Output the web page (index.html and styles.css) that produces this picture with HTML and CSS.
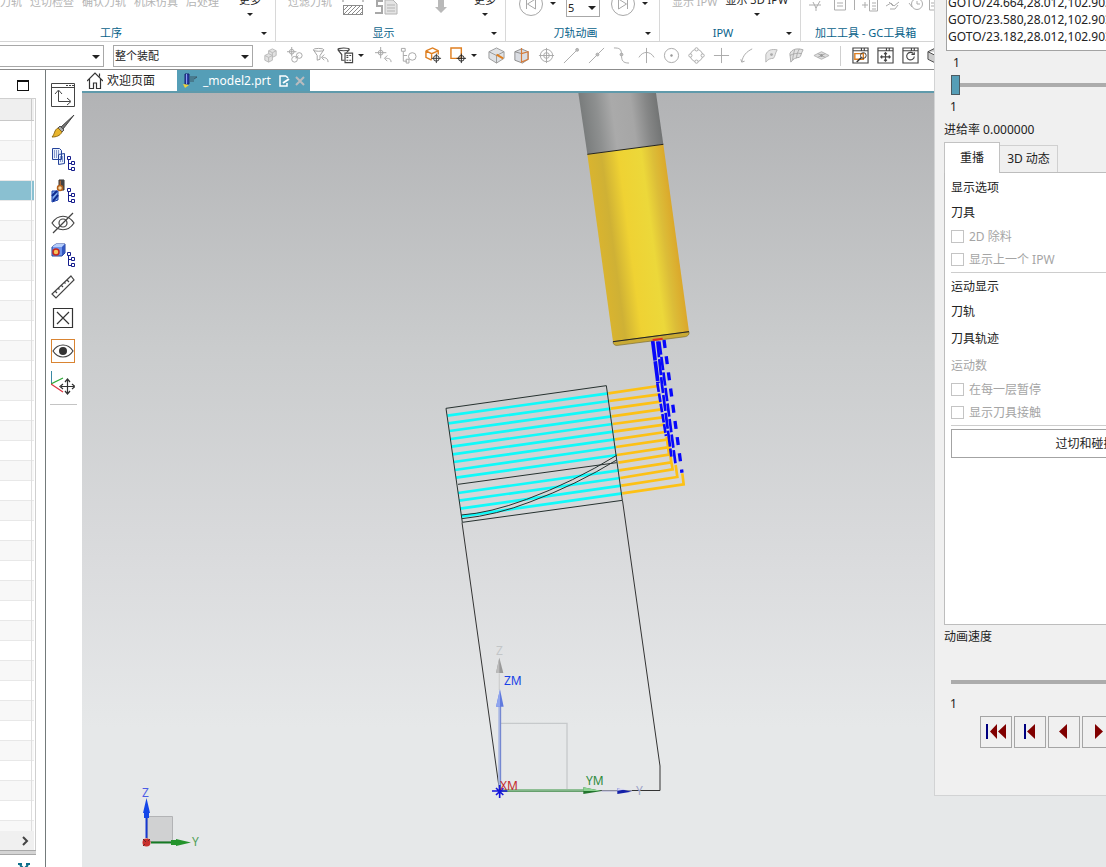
FILE: index.html
```html
<!DOCTYPE html>
<html lang="zh-CN">
<head>
<meta charset="utf-8">
<meta name="viewport" content="width=device-width, initial-scale=1">
<title>_model2.prt</title>
<link rel="stylesheet" href="styles.css">
</head>
<body>
<div class="app">
  <header class="ribbon">
    <section class="group group-operation">
      <div class="group-body">
        <span class="cmd dim">刀轨</span><span class="cmd dim">过切检查</span><span class="cmd dim">确认刀轨</span><span class="cmd dim">机床仿真</span><span class="cmd dim">后处理</span>
        <button class="more" type="button">更多<i class="caret"></i></button>
      </div>
      <div class="group-foot"><span>工序</span><i class="caret"></i></div>
    </section>
    <section class="group group-display">
      <div class="group-body">
        <span class="cmd dim">过滤刀轨</span>
        <svg class="big-icon" width="22" height="20" viewBox="0 0 22 20"><g fill="none" stroke="#8b8b8b"><path d="M1 2h2M19 2h2M1 1v4M21 1v4"/><rect x="1.500" y="8.500" width="19" height="9"/><path d="M2 13l4-4M2 17l8-8M6 17l8-8M10 17l8-8M14 17l6-6M18 17l2-2"/></g></svg>
        <svg class="big-icon" width="24" height="20" viewBox="0 0 24 20"><path d="M9 4H3v5h5v7H1" fill="none" stroke="#a8a8a8" stroke-width="2"/><path d="M11 3h8l4 4v10H11z" fill="#e4e4e4" stroke="#b4b4b4"/><path d="M13 8h8M13 11h8M13 14h8" stroke="#b4b4b4"/></svg>
        <svg class="big-icon down" width="14" height="20" viewBox="0 0 14 20"><path d="M4 3h6v7h3l-6 6-6-6h3z" fill="#b9b9b9"/></svg>
        <button class="more" type="button">更多<i class="caret"></i></button>
      </div>
      <div class="group-foot"><span>显示</span><i class="caret"></i></div>
    </section>
    <section class="group group-anim">
      <div class="group-body">
        <svg class="big-icon round" width="26" height="26" viewBox="0 0 26 26"><g fill="none" stroke="#a8a8a8"><circle cx="13" cy="13" r="11.500"/><path d="M8.500 8v10M17.500 8v10l-8-5z"/></g></svg>
        <i class="caret"></i>
        <label class="spin"><select aria-label="速度"><option>5</option></select></label>
        <svg class="big-icon round" width="26" height="26" viewBox="0 0 26 26"><g fill="none" stroke="#a8a8a8"><circle cx="13" cy="13" r="11.500"/><path d="M17.500 8v10M8.500 8v10l8-5z"/></g></svg>
        <i class="caret"></i>
      </div>
      <div class="group-foot"><span>刀轨动画</span><i class="caret"></i></div>
    </section>
    <section class="group group-ipw">
      <div class="group-body">
        <span class="cmd dim">显示 IPW</span>
        <button class="more" type="button">显示 3D IPW<i class="caret"></i></button>
      </div>
      <div class="group-foot"><span>IPW</span><i class="caret"></i></div>
    </section>
    <section class="group group-gc">
      <div class="group-body">
        <svg width="132" height="18" viewBox="0 0 132 18"><g fill="none" stroke="#adadad"><path d="M4 11h12M8 8l3 6 4-7M11 13v4"/><path d="M29.500 6v10h11V6M32 9h6M32 12h6M49.500 2v14"/><path d="M57 11h6M60 8v6M64.500 6v11h8V6M67 9h4M67 12h4M67 15h4"/><path d="M81 12l5-3 3 3 5-4M85 15h5l3-4M84 8l4 4"/><circle cx="112" cy="10" r="5.500"/><path d="M112 7v3h3M104 9l3 4M124.500 6v10h6M126 9h4M126 12h4"/></g></svg>
      </div>
      <div class="group-foot"><span>加工工具 - GC工具箱</span></div>
    </section>
  </header>

  <div class="toolbar">
    <label class="combo combo-filter"><select aria-label="类型过滤器"><option></option></select></label>
    <label class="combo combo-scope"><select aria-label="选择范围"><option>整个装配</option></select></label>
    <div class="tools">
      <button type="button" aria-label="部件"><svg viewBox="0 0 18 18"><g fill="#e2e2e2" stroke="#b9b9b9"><path d="M7 4l4-2 4 2v5l-4 2-4-2z"/><path d="M7 4l4 2 4-2M11 6v5" fill="none"/><path d="M3 9l4-2 4 2v5l-4 2-4-2z"/><path d="M3 9l4 2 4-2M7 11v5" fill="none"/></g></svg></button>
      <button type="button" aria-label="链接"><svg viewBox="0 0 18 18"><g fill="none" stroke="#a5a5a5"><circle cx="5" cy="5" r="2.500"/><path d="M5 0v10M0 5h10"/><circle cx="13" cy="9" r="3"/><circle cx="8" cy="13" r="3"/><path d="M9 12l3-3"/></g></svg></button>
      <button type="button" aria-label="重置过滤器"><svg viewBox="0 0 18 18"><g fill="none" stroke="#a0a0a0"><ellipse cx="7" cy="3" rx="5.500" ry="1.500"/><path d="M1.500 3l4 6v5l3-1V9l4-6M17 16c0-4-3-5-6-5M13 8l-3 3 3 3"/></g></svg></button>
      <button type="button" aria-label="常规过滤器"><svg viewBox="0 0 18 18"><g fill="none" stroke="#444" stroke-width="1.200"><ellipse cx="7" cy="2.500" rx="6" ry="1.500"/><path d="M1 3l4 5v6h3M13 3l-3 3"/><path d="M8.500 6.500h8v10h-8z" fill="#fff"/><path d="M10 9h2M13 9h2M10 11h2M10 14h2M13 14h2"/></g></svg></button>
      <i class="caret"></i>
      <button type="button" aria-label="撤销捕捉"><svg viewBox="0 0 18 18"><g fill="none" stroke="#a5a5a5"><circle cx="6" cy="6" r="2.500"/><path d="M6 0v12M0 6h12M17 16c0-4-3-4-6-4M13 9l-3 3 3 3"/></g></svg></button>
      <button type="button" aria-label="特征树"><svg viewBox="0 0 18 18"><g fill="none" stroke="#a5a5a5"><path d="M1.500 1.500h4v3h-4zM3.500 5v10h4M3.500 9h4M6.500 13h3v4h-3z"/><circle cx="13" cy="10" r="4"/></g></svg></button>
      <button type="button" aria-label="体"><svg viewBox="0 0 18 18"><g fill="none" stroke="#df7f20" stroke-width="1.500"><path d="M1 4l7-3 6 3v4M1 4v7l6 3M1 4l6 3 7-3M7 7v6"/></g><g fill="none" stroke="#333"><circle cx="12" cy="12" r="3"/><path d="M12 7v10M7 12h10"/></g></svg></button>
      <button type="button" aria-label="矩形选择"><svg viewBox="0 0 18 18"><path d="M1 1h11v11H1z" fill="none" stroke="#df7f20" stroke-width="1.500"/><g fill="none" stroke="#222"><circle cx="12" cy="12" r="3"/><path d="M12 7v10M7 12h10"/></g></svg></button>
      <i class="caret"></i>
      <button type="button" aria-label="面"><svg viewBox="0 0 18 18"><g fill="#dfe2e6" stroke="#999"><path d="M1 5l8-4 8 4v7l-8 5-8-5z"/><path d="M1 5l8 4 8-4M9 9v8" fill="none"/></g><path d="M9 8l7 4" stroke="#df7f20" stroke-width="2"/></svg></button>
      <button type="button" aria-label="边"><svg viewBox="0 0 18 18"><g fill="#dadde3" stroke="#8b8b8b"><path d="M2 5l7-3 7 3v8l-6 4-8-3z"/><path d="M2 5l7 2" /></g><path d="M9 1v15l7-3V5L9 7" fill="none" stroke="#d77b38" stroke-width="1.200"/></svg></button>
      <button type="button" aria-label="中心点"><svg viewBox="0 0 18 18"><g fill="none" stroke="#a8a8a8"><circle cx="9" cy="9" r="6.500"/><circle cx="9" cy="9" r="3"/><path d="M9 1v16M1 9h16"/></g></svg></button>
      <button type="button" aria-label="端点"><svg viewBox="0 0 18 18"><g fill="none" stroke="#a8a8a8"><path d="M1 17L14 4"/><circle cx="15" cy="3" r="1.500" fill="#bbb"/></g></svg></button>
      <button type="button" aria-label="中点"><svg viewBox="0 0 18 18"><g fill="none" stroke="#a8a8a8"><path d="M1 17L17 1"/><circle cx="10" cy="8" r="1.500" fill="#bbb"/></g></svg></button>
      <button type="button" aria-label="控制点"><svg viewBox="0 0 18 18"><g fill="none" stroke="#a8a8a8"><path d="M1 1c6 0 8 1 8 7s1 9 8 9"/><circle cx="9" cy="8" r="1.500" fill="#bbb"/></g></svg></button>
      <button type="button" aria-label="交点"><svg viewBox="0 0 18 18"><g fill="none" stroke="#a8a8a8"><path d="M9 1v16M1 11c4-7 12-7 16 0"/></g></svg></button>
      <button type="button" aria-label="圆心"><svg viewBox="0 0 18 18"><g fill="none" stroke="#a8a8a8"><circle cx="9" cy="9" r="7.500"/><circle cx="9" cy="9" r="1" fill="#999"/></g></svg></button>
      <button type="button" aria-label="象限点"><svg viewBox="0 0 18 18"><g fill="#fff" stroke="#a8a8a8"><circle cx="9" cy="9" r="6.500"/><circle cx="9" cy="2.500" r="1.700"/><circle cx="9" cy="15.500" r="1.700"/><circle cx="2.500" cy="9" r="1.700"/><circle cx="15.500" cy="9" r="1.700"/></g></svg></button>
      <button type="button" aria-label="现有点"><svg viewBox="0 0 18 18"><path d="M9 1v16M1 9h16" stroke="#a8a8a8"/></svg></button>
      <button type="button" aria-label="曲线上的点"><svg viewBox="0 0 18 18"><g fill="none" stroke="#a8a8a8"><path d="M15 2C9 5 5 9 4 16"/><path d="M3 13l1 3 3-1" /></g></svg></button>
      <button type="button" aria-label="面上的点"><svg viewBox="0 0 18 18"><path d="M3 8c2-5 6-6 12-5-2 3-2 7-4 9-3 0-6 1-8 4z" fill="#e6e6e6" stroke="#b5b5b5"/><circle cx="9" cy="8" r="1.500" fill="#aaa"/></svg></button>
      <button type="button" aria-label="极点"><svg viewBox="0 0 18 18"><path d="M2 7c2-5 8-6 14-4-2 3-2 7-4 8-4 0-7 2-9 5z" fill="#e2e2e2" stroke="#aaa"/><path d="M7 3c-1 4-2 7-2 11M12 2c-2 4-3 7-3 10M2 9c4-2 8-3 12-2" stroke="#aaa" fill="none"/></svg></button>
      <button type="button" aria-label="栅格点"><svg viewBox="0 0 18 18"><path d="M1 9l8-4 8 4-8 4z" fill="#ddd" stroke="#b5b5b5"/><path d="M5 7l8 4M5 11l8-4" stroke="#aaa"/><circle cx="9" cy="9" r="1.500" fill="#999"/></svg></button>
      <span class="divider"></span>
      <button type="button" aria-label="窗口缩放"><svg viewBox="0 0 18 18"><g fill="none" stroke="#444" stroke-width="1.200"><path d="M1 1h16v16H1zM1 4h16M10 1v3M13 1v3"/></g><path d="M3 7h9v6H3z" fill="none" stroke="#df7f20" stroke-width="1.500"/><circle cx="12" cy="9" r="3" fill="none" stroke="#333"/><path d="M10 11l-5 5" stroke="#333" stroke-width="1.500"/></svg></button>
      <button type="button" aria-label="平移"><svg viewBox="0 0 18 18"><g fill="none" stroke="#444" stroke-width="1.200"><path d="M1 1h16v16H1zM1 4h16M10 1v3M13 1v3M9 6v9M4 10.500h10M7.500 7.500L9 6l1.500 1.500M7.500 13.500L9 15l1.500-1.500M5.500 9L4 10.500 5.500 12M12.500 9l1.500 1.500-1.500 1.500"/></g></svg></button>
      <button type="button" aria-label="旋转"><svg viewBox="0 0 18 18"><g fill="none" stroke="#444" stroke-width="1.200"><path d="M1 1h16v16H1zM1 4h16M10 1v3M13 1v3M12 7a4 4 0 1 0 1 3M13 5.500V8h-3"/></g></svg></button>
      <button type="button" aria-label="视图方位"><svg viewBox="0 0 18 18"><g fill="#ccc" stroke="#444"><path d="M1 5l8-4 8 4v8l-8 4-8-4zM1 5l8 4 8-4M9 9v8"/></g></svg></button>
    </div>
  </div>

  <div class="workspace">
    <aside class="navigator">
      <div class="nav-title"><button type="button" class="maximize" aria-label="最大化"></button></div>
      <div class="nav-grid">
        <div class="nav-head"></div>
        <div class="nav-rows"><div class="nav-selected"></div></div>
        <div class="nav-scroll"><button type="button" aria-label="向右滚动"><svg width="8" height="10" viewBox="0 0 8 10"><path d="M1 1l4 4-4 4" fill="none" stroke="#444" stroke-width="2"/></svg></button></div>
      </div>
      <div class="nav-split"></div>
      <div class="nav-next"><svg width="14" height="10" viewBox="0 0 14 10"><path d="M1 1h4M9 1h4M3 2l4 4 4-4" fill="none" stroke="#0e6f8b" stroke-width="2"/></svg></div>
    </aside>

    <nav class="sidebar">
      <button type="button" aria-label="视图坐标"><svg viewBox="0 0 24 24"><g fill="none" stroke="#444"><path d="M.500.500h23v23H.500zM.500 4.500h23M15 2.500h2M18 2.500h2M21 2.500h2M7.500 8v10.500H19M4 11l3.500-4 3.500 4M16 15l4 3.500-4 3.500"/></g></svg></button>
      <button type="button" aria-label="画笔"><svg viewBox="0 0 24 24"><path d="M23 0L10 12l2 2z" fill="#777" stroke="#444"/><path d="M9 11l4 4-2 2-4-4z" fill="#aaa" stroke="#555"/><path d="M7 13l4 4c-2 4-6 5-10 5 3-3 2-7 6-9z" fill="#e8b52c" stroke="#8f6a18"/></svg></button>
      <button type="button" aria-label="程序顺序视图"><svg viewBox="0 0 24 24"><g fill="#e6effc" stroke="#24439a"><path d="M1.500 1.500h7l2 2v9h-9zM7.500 7.500l6-1v10l-6 1z"/><path d="M3 4h5M3 6h5M3 8h4M3 10h4M9 10h4M9 12h4M9 14h4" stroke-dasharray="1 1"/></g><use href="#tree"/></svg></button>
      <button type="button" aria-label="机床视图"><svg viewBox="0 0 24 24"><path d="M8 1h5v10H8z" fill="#a4643b" stroke="#333"/><path d="M10 1h3v9h-3z" fill="#444"/><circle cx="9" cy="9" r="2.500" fill="#f8d9a0" stroke="#b4601c" stroke-width="1.500"/><path d="M1 12h6v9l-6 2z" fill="#84aff0" stroke="#183caa"/><path d="M1 17l5-5M2 22l5-6" stroke="#102c90" stroke-width="2"/><use href="#tree"/></svg></button>
      <button type="button" aria-label="隐藏"><svg viewBox="0 0 24 24"><g fill="none" stroke="#444" stroke-width="1.200"><path d="M1 12c6-9 16-9 22 0-6 9-16 9-22 0z"/><circle cx="12" cy="12" r="4"/><path d="M2 22L22 2"/></g></svg></button>
      <button type="button" aria-label="几何视图"><svg viewBox="0 0 24 24"><path d="M1 4l4-3h9v9l-3 3H1z" fill="#6f93ea" stroke="#24439a"/><path d="M1 4l4-3h9l-3 3z" fill="#b5cdfb"/><path d="M11 4l3-3v9l-3 3z" fill="#3458c0"/><circle cx="5" cy="9" r="3" fill="#f8c25a" stroke="#c7271d" stroke-width="1.500"/><use href="#tree"/></svg></button>
      <button type="button" aria-label="测量"><svg viewBox="0 0 24 24"><g fill="none" stroke="#444" stroke-width="1.200"><path d="M20 1l3 4L5 23l-4-4zM4 16l2 2M7 13l1.500 1.500M10 10l2 2M13 7l1.500 1.500M16 5l2 2"/></g></svg></button>
      <button type="button" aria-label="关闭视图"><svg viewBox="0 0 24 24"><path d="M2.500 1.500h19v19h-19zM6 5l12 12M18 5L6 17" fill="none" stroke="#333" stroke-width="1.200"/></svg></button>
      <button type="button" class="on" aria-label="显示"><svg viewBox="0 0 24 24"><path d="M2 12c5-8 15-8 20 0-5 8-15 8-20 0z" fill="none" stroke="#444" stroke-width="1.200"/><circle cx="12" cy="12" r="4" fill="#333"/></svg></button>
      <button type="button" aria-label="移动坐标"><svg viewBox="0 0 24 24"><path d="M.500 0v13" stroke="#3b88a4"/><path d="M0 13l12-6" stroke="#2ea836" stroke-width="1.200"/><path d="M0 13l12 8" stroke="#dd3440" stroke-width="1.200"/><path d="M16.500 9v13M10 15.500h13M14 11l2.500-3 2.500 3M14 20l2.500 3 2.500-3M12 13l-3 2.500 3 2.500M21 13l3 2.500-3 2.500" fill="none" stroke="#333" stroke-width="1.200"/></svg></button>
      <hr>
    </nav>

    <main class="view">
      <div class="tabs">
        <a href="#home" class="tab"><svg width="16" height="17" viewBox="0 0 16 17"><path d="M0 9l8-8 8 8M2.500 7v9.500h4V11h3v5.500h4V7M12.500 4.500V1.500" fill="none" stroke="#333" stroke-width="1.200"/></svg>欢迎页面</a>
        <a href="#model" class="tab active"><svg width="16" height="16" viewBox="0 0 16 16"><path d="M3 1h4v10H3z" fill="#2b3da8" stroke="#18246e"/><path d="M4.500 1v10" stroke="#8b9ef0"/><path d="M8 4h7l-3 2H8M8 8h4" stroke="#3c5866" fill="none"/><path d="M1 11l6 1-4 3z" fill="#f0d23a"/></svg><span>_model2.prt</span><svg class="edit" width="11" height="12" viewBox="0 0 11 12"><path d="M7 1H1v10h7V8M7 1l2 2" fill="none" stroke="#fff" stroke-width="1.500"/><path d="M4 8l6-4" stroke="#fff" stroke-width="2"/></svg><button type="button" aria-label="关闭"><svg width="10" height="10" viewBox="0 0 10 10"><path d="M1 1l8 8M9 1L1 9" stroke="#b9bcbf" stroke-width="2"/></svg></button></a>
      </div>
      <svg class="scene" role="img" aria-label="刀轨显示">
        <defs>
          <g id="tree" fill="#fff" stroke="#141c8c"><path d="M16.500 9.500h3v3h-3zM17.500 13v9.500h3M18 16.500h2"/><path d="M20.500 14.500h3v3h-3zM20.500 20.500h3v3h-3z"/></g>
          <linearGradient id="insert" gradientUnits="userSpaceOnUse" x1="82" y1="208" x2="310" y2="178"><stop offset="0" stop-color="#d9b42f"/><stop offset=".18" stop-color="#cfb135"/><stop offset=".4" stop-color="#efd233"/><stop offset=".7" stop-color="#ecd83a"/><stop offset=".85" stop-color="#dcbd38"/><stop offset="1" stop-color="#dba92c"/></linearGradient>
          <linearGradient id="shank" gradientUnits="userSpaceOnUse" x1="82" y1="208" x2="310" y2="178"><stop offset="0" stop-color="#7a7d7d"/><stop offset=".2" stop-color="#8e9090"/><stop offset=".4" stop-color="#aaaaaa"/><stop offset=".65" stop-color="#a6a6a6"/><stop offset=".85" stop-color="#858686"/><stop offset="1" stop-color="#727474"/></linearGradient>
        </defs>
        <!-- part outline -->
        <g transform="translate(-82 -93)">
          <path d="M462 522.500L499.500 790.500H660V766L622.500 500.500" fill="none" stroke="#333"/>
        </g>
        <!-- cutting passes -->
        <g transform="translate(348 237) scale(.33333)" fill="none">
          <path d="M52 257L535 190M55 280L538 213M58 303L542 236M62 327L545 259M65 350L548 282M68 373L551 305M71 396L555 328M74 420L558 351M78 443L561 375M84 489L568 421M87 512L571 444M90 536L574 467M94 559L577 490" stroke="#10fafa" stroke-width="8"/>
          <path d="M535 190L685 168M538 213L688 193M542 236L692 215M545 259L694 238M548 282L698 262M551 305L703 284M555 328L706 306M558 351L710 329M561 375L713 352M565 398L717 374L710 320M568 421L724 397L716 340M571 444L728 418L722 385M574 467L742 441L737 405M577 490L761 463L757 430" stroke="#fdc115" stroke-width="8"/>
          <path d="M48 235L529 167L577 511L97 577zM84 463L560 398M94 555Q180 549 290 508Q430 456 560 376M96 566Q200 555 300 516Q440 464 560 390" stroke="#25302e" stroke-width="3"/>
          <g stroke="#0808fa" stroke-width="8"><path d="M668 32L684 160" stroke-width="11" stroke-dasharray="60 2"/><path d="M682 160L708 318" stroke-dasharray="26 5"/><path d="M682 34L696 165L724 380" stroke-dasharray="48 6"/><path d="M688 34L737 405" stroke-dasharray="40 7"/><path d="M702 30L756 428" stroke-width="10" stroke-dasharray="24 25"/></g>
        </g>
        <!-- cutter -->
        <g transform="translate(478 -8) scale(.33333)">
          <path d="M55 24H288L310 178 82 208z" fill="url(#shank)"/>
          <path d="M82 208L310 178 387 740 159 770z" fill="url(#insert)"/>
          <path d="M159 770L387 740Q389 752 376 755L174 781Q160 783 159 770z" fill="#c9aa34" stroke="#7d6c2c" stroke-width="2"/>
          <path d="M82 208L310 178M159 770L387 740" stroke="#222" stroke-width="3"/>
          <path d="M278 765L308 761" stroke="#e22b20" stroke-width="6"/>
        </g>
        <!-- work coordinate system -->
        <g transform="translate(378 537) scale(.33333)">
          <path d="M120 280H321V481" fill="none" stroke="#c6c9cb" stroke-width="4"/>
          <path d="M118 130V180" stroke="#cfd0d0" stroke-width="4"/><path d="M118 83L130 129H108z" fill="#999"/><path d="M118 83V129H108z" fill="#bbb"/>
          <path d="M119 225V480" stroke="#a6b4e2" stroke-width="8"/><path d="M122 225V480" stroke="#6b80cd" stroke-width="3"/>
          <path d="M120 178L131 230H108z" fill="#607ade"/><path d="M120 178V230H108z" fill="#8fa5ef"/>
          <path d="M120 480H372" stroke="#8ebe94" stroke-width="6"/><path d="M120 484H372" stroke="#4b9154" stroke-width="3"/>
          <path d="M370 472L425 483 370 492z" fill="#22752d"/><path d="M370 472L425 483H370z" fill="#8bd391"/>
          <path d="M425 483H516" stroke="#b7b9d8" stroke-width="4"/><path d="M472 475L514 485 472 492z" fill="#1420a8"/><path d="M472 475L500 478 472 482z" fill="#d8d8f4"/>
          <path d="M96 483H142M119 465V504M108 474L130 495M130 474L108 495" stroke="#1414dc" stroke-width="5"/>
        </g>
        <g class="axis-text">
          <text x="414" y="562" fill="#c3c6c8">Z</text><text x="422" y="592" fill="#1642e6">ZM</text><text x="418" y="697" fill="#c42a2c">XM</text><text x="504" y="692" fill="#2f8b3c">YM</text><text x="554" y="702" fill="#9ea4c8">Y</text>
        </g>
        <!-- view triad -->
        <g transform="translate(-82 -93)">
          <path d="M147.500 816.500h25v25h-25z" fill="#d0d1d2" stroke="#b2b3b5"/>
          <path d="M146.500 814v24" stroke="#1638d0" stroke-width="2"/><path d="M146.500 798l3.500 15h-1v5h-5v-5h-1z" fill="#1446e8"/>
          <path d="M151 842.500h25" stroke="#167a24" stroke-width="2"/><path d="M191 842.500l-15-3.500v1h-5v5h5v1z" fill="#24942c"/>
          <circle cx="146.500" cy="842.500" r="4" fill="#c8302c"/><path d="M143 839l3 3M150 839l-2 2M143 846l2-2" stroke="#6d2424"/>
        </g>
        <g class="axis-text"><text x="60" y="704" fill="#4c5ce6">Z</text><text x="110" y="753" fill="#4f9f58">Y</text></g>
      </svg>
    </main>
  </div>

  <section class="dialog" role="dialog" aria-label="刀轨可视化">
    <textarea class="listing" aria-label="刀轨列表" readonly wrap="off">GOTO/24.664,28.012,102.903
GOTO/23.580,28.012,102.903
GOTO/23.182,28.012,102.903</textarea>
    <div class="progress">
      <output class="now">1</output>
      <input type="range" aria-label="刀轨位置" min="1" max="500" value="1">
      <span>1</span>
    </div>
    <div class="feed">进给率 0.000000</div>
    <div class="dialog-tabs" role="tablist">
      <button type="button" role="tab" class="current">重播</button><button type="button" role="tab">3D 动态</button>
    </div>
    <div class="panel">
      <div class="row">显示选项</div>
      <div class="row">刀具</div>
      <label class="check"><input type="checkbox" disabled>2D 除料</label>
      <label class="check"><input type="checkbox" disabled>显示上一个 IPW</label>
      <hr>
      <div class="row">运动显示</div>
      <div class="row">刀轨</div>
      <div class="row tall">刀具轨迹</div>
      <div class="row off">运动数</div>
      <label class="check"><input type="checkbox" disabled>在每一层暂停</label>
      <label class="check"><input type="checkbox" disabled>显示刀具接触</label>
      <hr>
      <button type="button" class="gouge">过切和碰撞检查</button>
    </div>
    <div class="speed">
      <label for="speed">动画速度</label>
      <input id="speed" type="range" min="1" max="10" value="10">
      <span>1</span>
    </div>
    <div class="playback">
      <button type="button" aria-label="到起点"><svg viewBox="0 0 30 30"><path d="M5 7h2v15H5z" fill="#000080"/><path d="M16 7v15l-7-7.500zM25 7v15l-8-7.500z" fill="#800000"/></svg></button>
      <button type="button" aria-label="上一操作"><svg viewBox="0 0 30 30"><path d="M9 7h2v15H9z" fill="#000080"/><path d="M20 7v15l-8-7.500z" fill="#800000"/></svg></button>
      <button type="button" aria-label="后退"><svg viewBox="0 0 30 30"><path d="M18 7v15l-8-7.500z" fill="#800000"/></svg></button>
      <button type="button" aria-label="前进"><svg viewBox="0 0 30 30"><path d="M12 7v15l8-7.500z" fill="#800000"/></svg></button>
    </div>
  </section>
</div>
</body>
</html>
```

FILE: styles.css
```css
* { box-sizing: border-box; }
body {
  margin: 0;
  overflow: hidden;
  font: 12px/16px "Noto Sans", "Noto Sans CJK SC", sans-serif;
  color: #222;
  background: #fff;
}
button, select, input, textarea { font: inherit; color: inherit; margin: 0; }
button { padding: 0; border: 0; background: none; }
hr { border: 0; margin: 0; }
svg { display: block; flex: none; }

.app { position: relative; display: flex; flex-direction: column; height: 100vh; overflow: hidden; }
.caret {
  width: 0; height: 0; flex: none;
  border: 3px solid transparent;
  border-top-color: #222;
  border-bottom: 0;
}

/* ribbon */
.ribbon { display: flex; flex: none; height: 42px; overflow: hidden; border-bottom: 1px solid #d4d4d4; font-size: 11px; }
.group { display: flex; flex: none; flex-direction: column; justify-content: flex-end; }
.group + .group { border-left: 1px solid #d8d8d8; }
.group-operation { width: 275px; }
.group-display { width: 230px; }
.group-anim { width: 154px; }
.group-ipw { width: 141px; }
.group-gc { width: 306px; }
.group-body { display: flex; align-items: flex-end; height: 26px; padding-bottom: 8px; white-space: nowrap; }
.group-foot { display: flex; align-items: center; justify-content: center; height: 18px; padding: 0 8px 0 0; color: #08628a; }
.group-foot span { flex: 1; text-align: center; }
.group-operation .group-foot { padding-right: 8px; }
.group-operation .group-foot span { padding-right: 39px; }
.group-gc .group-foot { padding-left: 14px; }
.group-gc .group-foot span { flex: none; }
.group-gc .group-foot { justify-content: flex-start; }
.group-gc .group-body { padding: 0 0 13px 4px; }
.cmd { margin-bottom: 7px; }
.dim { color: #b4b4b4; }
.group-operation .group-body { gap: 8px; }
.more { display: flex; flex-direction: column; align-items: center; gap: 5px; padding-bottom: 1px; }
.group-operation .more { margin-left: 12px; }
.group-display .group-body { padding-left: 12px; gap: 10px; }
.group-display .down { margin: 0 18px 0 26px; }
.group-display .more { margin-left: -2px; }
.group-anim .group-body { padding-left: 12px; gap: 6px; }
.group-anim .group-body .caret { margin-bottom: 12px; }
.spin { position: relative; display: flex; width: 34px; height: 18px; margin: 0 4px; }
.group-ipw .group-body { padding-left: 12px; gap: 8px; }
.spin select, .combo select {
  width: 100%; padding: 0 0 0 1px;
  border: 1px solid #a8a8a8; border-radius: 0;
  appearance: none; background: #fff;
}
.spin::after, .combo::after {
  content: ""; position: absolute; right: 4px; top: 10px;
  border: 4px solid transparent; border-top-color: #222; border-bottom: 0;
}
.spin::after { top: 7px; }

/* selection bar */
.toolbar { display: flex; flex: none; align-items: center; height: 28px; border-bottom: 1px solid #8c8c8c; font-size: 11px; }
.combo { position: relative; display: flex; flex: none; height: 22px; }
.combo-filter { width: 104px; }
.combo-filter select { border-left: 0; }
.combo-scope { width: 140px; margin-left: 9px; }
.tools { display: flex; align-items: center; margin-left: 5px; }
.tools button { display: grid; place-items: center; flex: none; width: 25px; height: 24px; }
.tools svg { width: 17px; height: 17px; }
.tools .caret { margin: 0 7px 0 0; }
.divider { flex: none; width: 1px; height: 20px; margin: 0 7px 0 6px; background: #cfcfcf; }

/* navigator */
.workspace { display: flex; flex: 1; min-height: 0; }
.navigator { display: flex; flex: none; flex-direction: column; width: 46px; border-right: 1px solid #747b7b; }
.nav-title { display: flex; justify-content: flex-end; flex: none; height: 28px; padding: 10px 16px 0 0; }
.maximize { width: 12px; height: 11px; border: 1px solid #111; border-top-width: 2px; }
.nav-grid { display: flex; flex: 1; flex-direction: column; width: 36px; min-height: 0; border: solid #cfcfcf; border-width: 1px 1px 0 0; padding-right: 1px; }
.nav-head { flex: none; height: 22px; background: linear-gradient(90deg, transparent 31px, #c8c8c8 31px, #c8c8c8 32px, transparent 32px) #efefef; border-bottom: 1px solid #c8c8c8; }
.nav-rows {
  flex: 1; min-height: 0; padding-top: 60px;
  background:
    linear-gradient(90deg, transparent 31px, #dedede 31px, #dedede 32px, transparent 32px),
    repeating-linear-gradient(#fff 0, #fff 19px, #e8e8e8 19px, #e8e8e8 20px, #f8f8f8 20px, #f8f8f8 39px, #e8e8e8 39px, #e8e8e8 40px);
}
.nav-selected { height: 19px; background: linear-gradient(90deg, transparent 31px, #dceaf0 31px, #dceaf0 32px, transparent 32px) #8ac0d1; }
.nav-scroll { display: flex; flex: none; align-items: center; justify-content: flex-end; height: 19px; padding-right: 4px; background: #f0f0f0; }
.nav-split { flex: none; width: 36px; height: 5px; border: solid #a8a8a8; border-width: 1px 0; background: #d4d4d4; }
.nav-next { flex: none; height: 12px; padding: 8px 0 0 17px; overflow: hidden; }

/* icon bar */
.sidebar { display: flex; flex: none; flex-direction: column; align-items: center; gap: 4px; width: 36px; padding: 11px 2px 0 0; }
.sidebar button { display: grid; place-items: center; flex: none; width: 28px; height: 28px; }
.sidebar svg { width: 24px; height: 24px; }
.sidebar .on svg { outline: 1px solid #d98432; outline-offset: -1px; }
.sidebar hr { width: 27px; height: 1px; margin-top: 3px; background: #c4c4c4; }

/* graphics window */
.view { display: flex; flex: 1; flex-direction: column; min-width: 0; }
.tabs { display: flex; flex: none; height: 23px; border-bottom: 2px solid #5f9aab; }
.tab { display: flex; align-items: center; gap: 4px; width: 95px; padding-left: 5px; color: #222; text-decoration: none; }
.tab.active { gap: 5px; width: 133px; color: #fff; background: #559eb7; }
.tab .edit { margin-left: 3px; }
.scene { flex: 1; width: 100%; min-height: 0; background: linear-gradient(#b2b3b5, #cacccd 33%, #dadbdd 60%, #e6e8e9 82%); }
.axis-text { font-size: 12px; }

/* tool path dialog */
.dialog {
  position: absolute; top: 0; right: -146px;
  display: flex; flex-direction: column;
  width: 318px; padding-bottom: 47px;
  border: 1px solid #d2d3d4; border-top: 0;
  background: #f0f0f0;
}
.listing {
  display: block; height: 57px; margin: -6px 6px 0 11px; padding: 0 1px;
  border: 1px solid #a3a3a3; border-top: 0; border-radius: 0; outline: 0;
  resize: none; overflow: hidden; line-height: 17px; background: #fff;
}
.progress { display: flex; flex-direction: column; padding: 4px 6px 0 16px; }
.progress .now { padding-left: 2px; }
.progress span { margin-left: -1px; }
input[type="range"] { width: 100%; height: 20px; margin: 4px 0; appearance: none; background: none; }
input[type="range"]::-webkit-slider-runnable-track { height: 4px; background: #acacac; }
input[type="range"]::-webkit-slider-thumb { appearance: none; width: 9px; height: 20px; margin-top: -8px; border: 1px solid #4c5b62; background: #559eb7; }
.feed { padding: 7px 0 4px 9px; }
.dialog-tabs { display: flex; align-items: flex-end; height: 30px; margin-left: 9px; }
.dialog-tabs button { width: 58px; height: 27px; border: 1px solid #d0d0d0; border-width: 1px 1px 0 0; }
.dialog-tabs .current { position: relative; z-index: 1; width: 56px; height: 31px; margin-bottom: -1px; border-color: #c2c2c2; border-left-width: 1px; background: #fff; }
.panel { height: 453px; margin: 0 6px 0 9px; padding: 2px 6px; border: 1px solid #bdbdbd; background: #fff; }
.row { display: flex; align-items: center; height: 25px; }
.tall { height: 29px; }
.off, .check { color: #a5a5a5; }
.check { display: flex; align-items: center; gap: 5px; height: 23px; }
.check input { width: 13px; height: 13px; appearance: none; border: 1px solid #c4c4c4; background: #fff; }
.panel hr { height: 1px; margin: 1px 0; background: #cdcdcd; }
.gouge { width: 100%; height: 29px; margin-top: 2px; padding-left: 6px; border: 1px solid #a3a3a3; background: #fff; }
.speed { display: flex; flex-direction: column; padding: 4px 6px 0 9px; }
.speed input { width: auto; margin: 27px 0 4px 7px; }
.speed span { padding-left: 6px; }
.playback { display: flex; gap: 2px; padding: 4px 0 0 45px; }
.playback button { flex: none; width: 32px; height: 32px; border: 1px solid #a5a5a5; }
.playback svg { width: 30px; height: 30px; }
```
